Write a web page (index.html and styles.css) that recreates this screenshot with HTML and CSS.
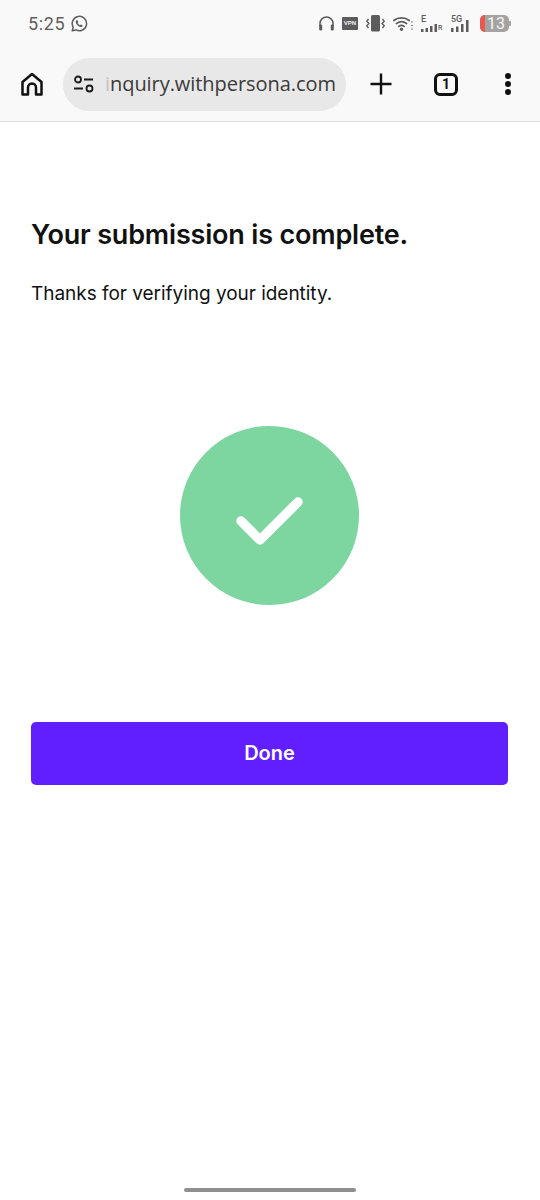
FILE: index.html
```html
<!DOCTYPE html>
<html lang="en">
<head>
<meta charset="utf-8">
<title>Persona</title>
<link rel="stylesheet" href="styles.css">
</head>
<body>
<div class="phone">
  <header class="chrome">
    <div class="status">
      <div class="status-left">
        <span class="time">5:25</span>
        <svg class="wa" width="18" height="18" viewBox="0 0 18 18" fill="none">
          <path d="M2.2 15.8l1-3.6A7.2 7.2 0 1 1 6 14.9z" stroke="#5f5f5f" stroke-width="1.5" stroke-linejoin="round"/>
          <path d="M6.4 5.4c-.8.7-.9 1.800-.2 3 .8 1.500 2 2.700 3.500 3.400 1.200.5 2.200.3 2.800-.6.200-.3.200-.7-.1-.9l-1.200-.7c-.3-.1-.5 0-.7.200l-.4.5c-1-.4-1.900-1.300-2.400-2.300l.4-.5c.2-.2.200-.4.100-.7l-.6-1.300c-.2-.4-.8-.5-1.200-.1z" fill="#5f5f5f"/>
        </svg>
      </div>
      <div class="status-right">
        <svg width="15" height="15" viewBox="0 0 15 15" fill="none">
          <path d="M1 10V7.500a6.500 6.500 0 0 1 13 0V10" stroke="#5c5c5c" stroke-width="1.500"/>
          <rect x="0.200" y="8.500" width="3" height="6" rx="1.200" fill="#5c5c5c"/>
          <rect x="11.800" y="8.500" width="3" height="6" rx="1.200" fill="#5c5c5c"/>
        </svg>
        <span class="vpn">VPN</span>
        <svg width="19" height="17" viewBox="0 0 19 17" fill="none">
          <rect x="5" y="0" width="9" height="16.500" rx="1.500" fill="#5c5c5c"/>
          <path d="M2.500 4L.8 6.300 3 8.500.8 10.700 2.500 13M16.500 4l1.700 2.300L16 8.500l2.200 2.200L16.500 13" stroke="#5c5c5c" stroke-width="1.300"/>
        </svg>
        <svg class="wifi" width="20" height="16" viewBox="0 0 20 16" fill="none">
          <path d="M.8 5.500a12.500 12.500 0 0 1 15.400 0M3.400 8.600a8.500 8.500 0 0 1 10.200 0M5.900 11.400a4.300 4.300 0 0 1 5.200 0" stroke="#5c5c5c" stroke-width="1.700" stroke-linecap="round"/>
          <circle cx="8.500" cy="14.200" r="1.700" fill="#5c5c5c"/>
          <path d="M19 6.500v1M19 10v1M19 13.500v1" stroke="#5c5c5c" stroke-width="1.500"/>
        </svg>
        <div class="signal sig-e">
          <span class="sig-label">E</span>
          <svg width="17" height="8" viewBox="0 0 17 8"><path d="M0 5h2.500v3H0zM4.500 4H7v4H4.500zM9 2h2.500v6H9zM13.500 0H16v8h-2.500z" fill="#5c5c5c"/></svg>
          <span class="sig-r">R</span>
        </div>
        <div class="signal sig-5g">
          <span class="sig-label">5G</span>
          <svg width="21" height="12" viewBox="0 0 21 12"><path d="M0 8h2.500v4H0zM5 6.500h2.500V12H5zM10 4h2.500v8H10zM15 0h2.500v12H15z" fill="#5c5c5c"/></svg>
        </div>
        <div class="battery"><span class="batt-low"></span><span class="batt-num">13</span><span class="batt-tip"></span></div>
      </div>
    </div>
    <div class="toolbar">
      <svg class="home" width="24" height="24" viewBox="0 0 24 24" fill="none">
        <path d="M2.500 22.500V10L12 2l9.500 8v12.500h-5.500V15.500a4 4 0 0 0-8 0v7z" stroke="#111" stroke-width="2.500" stroke-linejoin="round"/>
      </svg>
      <div class="omnibox">
        <svg class="tune" width="22" height="18" viewBox="0 0 22 18" fill="none">
          <circle cx="5" cy="4.500" r="3" stroke="#1a1a1a" stroke-width="1.800"/>
          <path d="M11 4.500h9M1 13.500h9" stroke="#1a1a1a" stroke-width="1.800"/>
          <circle cx="16.500" cy="13.500" r="3" stroke="#1a1a1a" stroke-width="1.800"/>
        </svg>
        <span class="url"><span class="fade">i</span>nquiry.withpersona.com</span>
      </div>
      <svg class="plus" width="24" height="24" viewBox="0 0 24 24"><path d="M12 1.500v21M1.500 12h21" stroke="#111" stroke-width="2.400"/></svg>
      <span class="tabs">1</span>
      <svg class="menu" width="8" height="24" viewBox="0 0 8 24"><circle cx="4" cy="4" r="3" fill="#111"/><circle cx="4" cy="12" r="3" fill="#111"/><circle cx="4" cy="20" r="3" fill="#111"/></svg>
    </div>
  </header>
  <main class="content">
    <h1 class="title">Your submission is complete.</h1>
    <p class="lead">Thanks for verifying your identity.</p>
    <div class="result">
      <svg width="179" height="179" viewBox="0 0 179 179">
        <circle cx="89.500" cy="89.500" r="89.500" fill="#7dd5a0"/>
        <path d="M61 95l19 19 38-38" fill="none" stroke="#fff" stroke-width="9.500" stroke-linecap="round" stroke-linejoin="round"/>
      </svg>
    </div>
    <button class="done" type="button">Done</button>
  </main>
  <div class="gesture"><span class="pill"></span></div>
</div>
</body>
</html>
```
FILE: styles.css
```css
* { box-sizing: border-box; }
html, body { margin: 0; padding: 0; }
body { background: #fff; font-family: Inter, "Liberation Sans", sans-serif; }
.phone { width: 540px; height: 1200px; display: flex; flex-direction: column; overflow: hidden; }
.chrome { background: #f9f9f9; height: 122px; border-bottom: 1px solid #dcdcdc; flex: none; }
.status { height: 46px; padding: 12px 29px 0 28px; display: flex; justify-content: space-between; align-items: flex-start; }
.status-left { display: flex; align-items: center; gap: 5px; }
.time { font: 400 18px/24px Roboto, sans-serif; letter-spacing: 0.6px; color: #5f5f5f; }
.status-right { display: flex; align-items: center; gap: 8px; height: 22px; }
.vpn { width: 16px; height: 13px; background: #5c5c5c; color: #f2f2f2; border-radius: 1px; font: 700 6px/13px "Liberation Sans", sans-serif; text-align: center; }
.signal { position: relative; height: 17px; display: flex; align-items: flex-end; gap: 1px; }
.sig-e { width: 22px; }
.sig-5g { width: 21px; }
.sig-label { position: absolute; left: 0; top: 0; font: 500 9px/9px Roboto, sans-serif; color: #5c5c5c; }
.sig-r { font: 500 7px/8px Roboto, sans-serif; color: #5c5c5c; margin-left: -1px; }
.battery { position: relative; width: 29px; height: 17px; margin-right: 2px; background: #a3a3a3; border-radius: 5px; text-align: center; padding-left: 3px; }
.batt-low { position: absolute; left: 0; top: 0; bottom: 0; width: 5px; background: #e8584f; border-radius: 5px 0 0 5px; }
.batt-num { position: relative; display: block; font: 400 16px/17px Roboto, sans-serif; color: #f5f5f5; }
.batt-tip { position: absolute; right: -2px; top: 6px; width: 2px; height: 5px; background: #a3a3a3; border-radius: 0 1px 1px 0; }
.toolbar { height: 75px; display: flex; align-items: center; padding: 1px 0 0 20px; }
.home { flex: none; }
.omnibox { margin-left: 19px; width: 283px; height: 53px; border-radius: 27px; background: #e8e8e8; display: flex; align-items: center; padding-left: 10px; flex: none; overflow: hidden; }
.tune { flex: none; }
.url { margin-left: 10px; font: 400 20px/26px "Open Sans", sans-serif; color: #3a3a3a; white-space: nowrap; letter-spacing: -0.06px; }
.fade { color: #c4c4c4; }
.plus { margin-left: 23px; flex: none; }
.tabs { margin-left: 41px; width: 24px; height: 23px; border: 3px solid #111; border-radius: 6px; font: 700 14px/17px Roboto, sans-serif; text-align: center; color: #111; flex: none; }
.menu { margin-left: 46px; flex: none; }
.content { flex: 1; padding: 0 32px 0 31px; }
.title { margin: 93px 0 0; font-size: 27px; line-height: 40px; font-weight: 600; color: #111; letter-spacing: -0.18px; }
.lead { margin: 25px 0 0; font-size: 19px; line-height: 28px; font-weight: 400; color: #111; letter-spacing: -0.03px; }
.result { margin-top: 118px; display: flex; justify-content: center; }
.result svg { display: block; }
.done { display: block; margin-top: 117px; padding: 0 0 2px; width: 100%; height: 63px; border: 0; border-radius: 5px; background: #611fff; color: #fff; font: 600 20px/24px Inter, sans-serif; }
.gesture { height: 12px; flex: none; display: flex; justify-content: center; align-items: flex-start; padding-bottom: 8px; }
.pill { width: 172px; height: 4px; border-radius: 2px; background: #8f8f8f; }
```
